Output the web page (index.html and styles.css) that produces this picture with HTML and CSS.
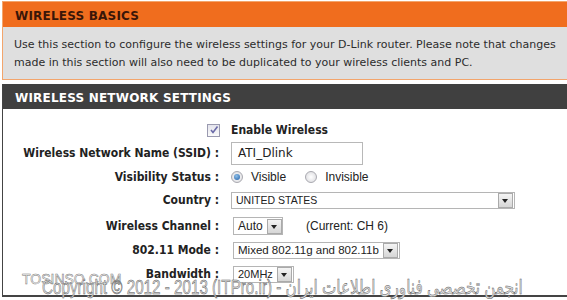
FILE: index.html
```html
<!DOCTYPE html>
<html lang="en">
<head>
  <meta charset="UTF-8">
  <title>Wireless Basics</title>
  <link rel="stylesheet" href="styles.css">
</head>
<body>
  <div class="page">
    <!-- Intro box -->
    <div class="box basics">
      <h2>WIRELESS BASICS</h2>
      <p>Use this section to configure the wireless settings for your D-Link router. Please note that changes made in this section will also need to be duplicated to your wireless clients and PC.</p>
    </div>

    <!-- Settings form -->
    <div class="box settings">
      <h2>WIRELESS NETWORK SETTINGS</h2>
      <div class="rows">
        <div class="row">
          <span class="lbl"><span class="check"><svg width="12" height="12" viewBox="0 0 12 12"><path d="M3 6 L5 8.5 L9.5 2.5" fill="none" stroke="#6a6aa8" stroke-width="1.6"/></svg></span></span>
          <span class="field strong">Enable Wireless</span>
        </div>
        <div class="row">
          <span class="lbl">Wireless Network Name (SSID) :</span>
          <span class="field"><span class="text-input">ATI_Dlink</span></span>
        </div>
        <div class="row">
          <span class="lbl">Visibility Status :</span>
          <span class="field">
            <span class="radio on"></span><span class="opt">Visible</span>
            <span class="radio"></span><span class="opt">Invisible</span>
          </span>
        </div>
        <div class="row">
          <span class="lbl">Country :</span>
          <span class="field"><span class="select country">UNITED STATES<span class="arrow"></span></span></span>
        </div>
        <div class="row tall first-sel">
          <span class="lbl">Wireless Channel :</span>
          <span class="field"><span class="select channel">Auto<span class="arrow"></span></span><span class="note">(Current: CH 6)</span></span>
        </div>
        <div class="row tall">
          <span class="lbl">802.11 Mode :</span>
          <span class="field"><span class="select mode">Mixed 802.11g and 802.11b<span class="arrow"></span></span></span>
        </div>
        <div class="row tall">
          <span class="lbl">Bandwidth :</span>
          <span class="field"><span class="select bw">20MHz<span class="arrow"></span></span></span>
        </div>
      </div>
    </div>
  </div>

  <!-- Watermarks over the screenshot -->
  <div class="mark-site">TOSINSO.COM</div>
  <div class="mark-copy">Copyright © 2012 - 2013 (ITPro.ir) - انجمن تخصصی فناوری اطلاعات ایران</div>
</body>
</html>
```

FILE: styles.css
```css
/* Router admin page look */
body {
  margin: 0;
  font-family: 'DejaVu Sans', Verdana, sans-serif;
  background: #ffffff;
  color: #222;
  overflow: hidden;
  width: 567px;
  height: 300px;
  position: relative;
}
.page {
  padding: 1px 0 0 2px;
  width: 600px;
}
.box {
  border: 1px solid #f3a56c;
}
.box h2 {
  margin: 0;
  font-size: 12px;
  font-weight: bold;
  padding: 7px 12px 0;
  height: 18px;
  letter-spacing: 0.2px;
}
.basics h2 {
  background: #f06d1e;
  color: #3a1608;
}
.basics p {
  margin: 0;
  background: #dfdfdf;
  padding: 9px 40px 7px 11px;
  font-size: 11px;
  line-height: 18px;
  color: #2c2c2c;
}
.settings {
  margin-top: 4px;
  border: none;
  border-left: 1px solid #444;
  border-bottom: 2px solid #444;
  height: 211px;
}
.settings h2 {
  background: #404040;
  color: #fff;
  padding-left: 12px;
}
.rows {
  padding-top: 9px;
}
.row {
  display: flex;
  align-items: center;
  height: 23.5px;
}
.row.tall {
  height: 24px;
}
.row.first-sel {
  margin-top: 2px;
}
.lbl {
  width: 216px;
  text-align: right;
  font-family: 'DejaVu Sans Condensed', 'DejaVu Sans', sans-serif;
  font-weight: bold;
  font-size: 12px;
  padding-right: 12px;
}
.field {
  display: flex;
  align-items: center;
  font-family: 'Liberation Sans', Arial, sans-serif;
  font-size: 12px;
}
.strong {
  font-family: 'DejaVu Sans Condensed', 'DejaVu Sans', sans-serif;
  font-weight: bold;
}
.check {
  display: inline-block;
  width: 11px;
  height: 11px;
  border: 1px solid #9a9ab0;
  background: linear-gradient(#e4e4ec, #fafafa);
  vertical-align: middle;
  margin-right: -1px;
}
.check svg {
  display: block;
  margin: -1px 0 0 0;
}
.text-input {
  width: 124px;
  height: 21px;
  line-height: 21px;
  padding-left: 6px;
  border: 1px solid #b8b8b8;
  font-family: 'DejaVu Sans', sans-serif;
  font-size: 12px;
}
.radio {
  width: 10px;
  height: 10px;
  border: 1px solid #a9a9b0;
  border-radius: 50%;
  background: radial-gradient(circle, #ffffff 0, #d8d8dc 100%);
  margin-right: 8px;
  position: relative;
}
.radio.on::after {
  content: "";
  position: absolute;
  left: 2px;
  top: 2px;
  width: 6px;
  height: 6px;
  border-radius: 50%;
  background: radial-gradient(circle at 40% 35%, #8fc0e8, #1f5ea8);
}
.opt {
  margin-right: 19px;
}
.select {
  display: flex;
  align-items: center;
  justify-content: space-between;
  border: 1px solid #b5b5b5;
  height: 15px;
  padding: 0 1px 0 4px;
  background: #fff;
}
.arrow {
  flex-shrink: 0;
  width: 13px;
  height: 13px;
  border: 1px solid #aaa;
  background: linear-gradient(#f4f4f4, #d6d6d6);
  position: relative;
  margin-left: 4px;
}
.arrow::after {
  content: "";
  position: absolute;
  left: 3px;
  top: 5px;
  border-left: 3.5px solid transparent;
  border-right: 3.5px solid transparent;
  border-top: 4px solid #222;
}
.country {
  width: 277px;
  font-size: 10.5px;
}
.channel {
  margin-left: 2px;
  height: 16px;
  width: 43px;
}
.note {
  margin-left: 23px;
}
.mode {
  margin-left: 2px;
  font-size: 11.5px;
}
.bw {
  margin-left: 2px;
  font-size: 11px;
}

/* Overlaid watermark text */
.mark-site {
  position: absolute;
  left: 22px;
  top: 271px;
  font-family: 'Liberation Sans', Arial, sans-serif;
  font-size: 14px;
  color: #fff;
  -webkit-text-stroke: 0.5px #777;
}
.mark-copy {
  position: absolute;
  left: 42px;
  top: 275px;
  font-family: 'Liberation Sans', 'DejaVu Sans', sans-serif;
  font-size: 20px;
  color: #e2e2e2;
  -webkit-text-stroke: 0.5px #555;
  white-space: nowrap;
  transform: scaleX(0.76);
  transform-origin: left top;
}
```
